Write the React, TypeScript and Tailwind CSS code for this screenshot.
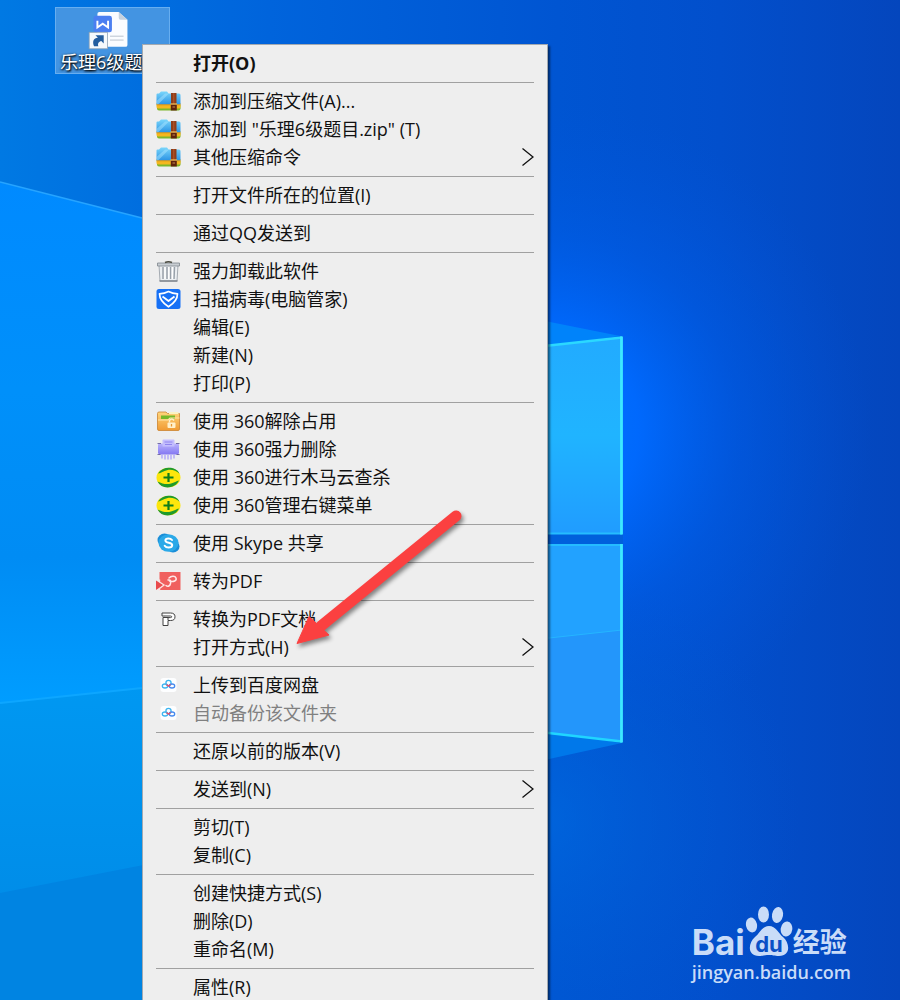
import type { ReactNode } from "react"

type MenuItem = {
    label: string
    icon?: ReactNode
    submenu?: boolean
    disabled?: boolean
    bold?: boolean
}

function ZipIcon() {
    return (
        <svg viewBox="0 0 25 20" className="h-5 w-[25px]" aria-hidden="true">
            <defs>
                <linearGradient id="zipBlue" x1="0" y1="0" x2="0" y2="1">
                    <stop offset="0" stopColor="#7ad6fb" />
                    <stop offset="1" stopColor="#2b93e4" />
                </linearGradient>
            </defs>
            <path d="M1 14h23.500v3.500q0 2-2 2H3q-2 0-2-2z" fill="#7fb62b" />
            <path d="M0.500 12h24v4q0 1.500-2 1.500H2.500q-2 0-2-1.500z" fill="#f5b71f" />
            <path d="M0.500 3.500q0-1 1-1H3L5 0.500h6l1.500 2H23q1.500 0 1.500 1.500v9.500H0.500z" fill="url(#zipBlue)" />
            <path d="M0.500 10L9 2.500h4L2 13.500H0.500z" fill="#a5e3ff" opacity="0.5" />
            <path d="M0.500 13.800h24" stroke="#d98c14" strokeWidth="0.800" />
            <path d="M15 2h5.500v12H15z" fill="#8f3d19" />
            <path d="M17.300 2h1v12h-1z" fill="#b4582a" />
            <path d="M14.800 13.500h6v6h-6z" fill="#5f220c" />
            <path d="M14.500 13h6.500" stroke="#f4c65c" strokeWidth="1.200" />
            <path d="M16.500 16h2.600" stroke="#c98a4c" strokeWidth="1" />
        </svg>
    )
}

function TrashIcon() {
    return (
        <svg viewBox="0 0 25 21" className="h-[21px] w-[25px]" aria-hidden="true">
            <path d="M3 4h19l-1 16H4z" fill="#eceff2" stroke="#a5abb2" strokeWidth="1" />
            <path d="M7 6v12M11 6v12M14.500 6v12M18.500 6l-.5 12" stroke="#98a0a9" strokeWidth="1.500" />
            <path d="M9 6v12M12.800 6v12M16.500 6v12" stroke="#ffffff" strokeWidth="1.200" />
            <path d="M1.500 2h22v3h-22z" fill="#c9ced3" stroke="#7f868d" strokeWidth="0.800" />
            <path d="M9 1.500q3.500-1.500 7 0" fill="none" stroke="#4a4a40" strokeWidth="1.400" />
            <path d="M3.500 20h18" stroke="#7b828a" strokeWidth="1.400" />
        </svg>
    )
}

function ShieldIcon() {
    return (
        <svg viewBox="0 0 25 20" className="h-5 w-[25px]" aria-hidden="true">
            <rect x="0.500" width="24" height="20" rx="2.500" fill="#1670f5" />
            <path
                d="M12.500 2.500q4 2 9 2.300c0 6-3.500 9.500-9 13-5.500-3.500-9-7-9-13q5-.3 9-2.300z"
                fill="none"
                stroke="#fff"
                strokeWidth="1.700"
                strokeLinejoin="round"
            />
            <path d="M6.500 7.500l6 4.500 6-4.500" fill="none" stroke="#fff" strokeWidth="1.800" strokeLinejoin="round" />
        </svg>
    )
}

function UnlockFolderIcon() {
    return (
        <svg viewBox="0 0 25 20" className="h-5 w-[25px]" aria-hidden="true">
            <defs>
                <linearGradient id="folderOrange" x1="0" y1="0" x2="0" y2="1">
                    <stop offset="0" stopColor="#ffd67c" />
                    <stop offset="1" stopColor="#f09a32" />
                </linearGradient>
            </defs>
            <path d="M1.500 2.500q0-1.500 1.500-1.500h7l1.500 1.500H23.500V18q0 1.500-1.500 1.500H3q-1.500 0-1.500-1.500z" fill="url(#folderOrange)" stroke="#cb8430" strokeWidth="0.800" />
            <path d="M13 1h9.500v2H13z" fill="#fbf3c4" />
            <path d="M5 4.500h14v3.500H5z" fill="#76b82a" />
            <path d="M2 9h10l2-2h9.500" fill="none" stroke="#ffe6a8" strokeWidth="1.200" />
            <rect x="11.500" y="11.500" width="8" height="5.500" rx="1" fill="#fff0c9" />
            <path d="M13.500 11.500V9.500q2.200-3 4.500 0" fill="none" stroke="#fff0c9" strokeWidth="1.400" />
            <path d="M15.500 13v2.500" stroke="#e79632" strokeWidth="1.300" />
        </svg>
    )
}

function ShredderIcon() {
    return (
        <svg viewBox="0 0 25 21" className="h-[21px] w-[25px]" aria-hidden="true">
            <defs>
                <linearGradient id="shredder" x1="0" y1="0" x2="0" y2="1">
                    <stop offset="0" stopColor="#b9b2fc" />
                    <stop offset="1" stopColor="#8478f2" />
                </linearGradient>
            </defs>
            <path d="M2 6q0-1.500 1.500-1.500h18q1.500 0 1.500 1.500v7.500q0 2-2 2H4q-2 0-2-2z" fill="url(#shredder)" />
            <path d="M6.500 1.500q0-1 1-1h10q1 0 1 1v6h-12z" fill="#c3bdfd" />
            <path d="M8.500 3h8M9 5.500h7" stroke="#9085ee" strokeWidth="1" />
            <path d="M1.500 4.500h3.500M20 4.500h3.500M1.500 15.500h3M20.500 15.500h3" stroke="#5b5394" strokeWidth="0.800" />
            <path d="M6 15.500v4M9 15.500v5M12 15.500v5M15 15.500v5M18 15.500v4" stroke="#b3abf8" strokeWidth="1.500" />
        </svg>
    )
}

function PlusBallIcon() {
    return (
        <svg viewBox="0 0 25 21" className="h-[21px] w-[25px]" aria-hidden="true">
            <ellipse cx="12.500" cy="10.500" rx="12" ry="9.800" fill="#fde60c" />
            <path d="M2 6.500C5 1.500 11-.2 17 1.200c3.500 1 5.500 3 6.500 5.500C20 3.500 15 2 11 3.300 7.500 4.300 5 6 2 6.500z" fill="#1f9a2c" />
            <path d="M1.500 14.500c5 2.500 9.500 3.200 13.500 2 3-.8 5.500-2.500 8-3-2.500 5-7 6.900-11.500 6.900S3.500 18.500 1.500 14.500z" fill="#1f9a2c" />
            <path d="M12.500 6v9M7.500 10.500h10" stroke="#0f7d1c" strokeWidth="2.200" />
        </svg>
    )
}

function SkypeIcon() {
    return (
        <svg viewBox="0 0 25 20" className="h-5 w-[25px]" aria-hidden="true">
            <ellipse cx="8.500" cy="7" rx="7" ry="6.500" fill="#1a8ed8" />
            <ellipse cx="17" cy="13.500" rx="6.500" ry="6" fill="#1a8ed8" />
            <ellipse cx="12.500" cy="10" rx="10" ry="8.800" fill="#2ba9e8" />
            <path
                d="M16 7Q14.800 5.400 12.500 5.400 9.400 5.400 9.400 7.500c0 2.900 6.800 1.600 6.800 4.600 0 2-1.800 2.500-3.700 2.500q-2.600 0-3.800-1.800"
                fill="none"
                stroke="#fff"
                strokeWidth="2"
                strokeLinecap="round"
            />
        </svg>
    )
}

function PdfRedIcon() {
    return (
        <svg viewBox="0 0 25 20" className="h-5 w-[25px]" aria-hidden="true">
            <path d="M3.500 1h21v18H3.500z" fill="#f0605f" />
            <path d="M0 9.500l7.500 4.500L0 19z" fill="#e94b4d" />
            <path d="M3.500 8.500v2.500l4.500 3-4.500 3.500V20" fill="none" stroke="#fbe3e3" strokeWidth="1.400" />
            <path
                d="M10 14.500c2 1.500 4 .5 4.500-2s.5-4-2.500-3.500M13 7c2-2 6-2.500 7 0s-2.500 4.500-6.500 3"
                fill="none"
                stroke="#ffe9e9"
                strokeWidth="1.500"
                strokeLinecap="round"
            />
        </svg>
    )
}

function PdfOutlineIcon() {
    return (
        <svg viewBox="0 0 25 20" className="h-5 w-[25px]" aria-hidden="true">
            <path
                d="M6 4h8.500q4.500 0 4.500 3.800t-4.500 3.700H12V16.500H7V8.500h5V11M6 4v3h8.500q1.200 0 1.200.8t-1.200.8H12"
                fill="#fff"
                stroke="#404040"
                strokeWidth="1"
                strokeLinejoin="round"
            />
        </svg>
    )
}

function NetdiskIcon() {
    return (
        <svg viewBox="0 0 25 20" className="h-5 w-[25px]" aria-hidden="true">
            <rect x="4.500" y="3" width="16" height="14" rx="3" fill="#fdfeff" />
            <circle cx="12.500" cy="8" r="2.600" fill="none" stroke="#3cb4f0" strokeWidth="1.300" />
            <ellipse cx="9" cy="11" rx="2.700" ry="2" fill="none" stroke="#3cb4f0" strokeWidth="1.300" />
            <ellipse cx="16" cy="11" rx="2.700" ry="2" fill="none" stroke="#4589ee" strokeWidth="1.300" />
            <path d="M10.500 9.500l2 1.700 2-1.700" fill="none" stroke="#ee4c67" strokeWidth="1.300" />
        </svg>
    )
}

const MENU_GROUPS: MenuItem[][] = [
    [{ label: "打开(O)", bold: true }],
    [
        { label: "添加到压缩文件(A)...", icon: <ZipIcon /> },
        { label: '添加到 "乐理6级题目.zip" (T)', icon: <ZipIcon /> },
        { label: "其他压缩命令", icon: <ZipIcon />, submenu: true },
    ],
    [{ label: "打开文件所在的位置(I)" }],
    [{ label: "通过QQ发送到" }],
    [
        { label: "强力卸载此软件", icon: <TrashIcon /> },
        { label: "扫描病毒(电脑管家)", icon: <ShieldIcon /> },
        { label: "编辑(E)" },
        { label: "新建(N)" },
        { label: "打印(P)" },
    ],
    [
        { label: "使用 360解除占用", icon: <UnlockFolderIcon /> },
        { label: "使用 360强力删除", icon: <ShredderIcon /> },
        { label: "使用 360进行木马云查杀", icon: <PlusBallIcon /> },
        { label: "使用 360管理右键菜单", icon: <PlusBallIcon /> },
    ],
    [{ label: "使用 Skype 共享", icon: <SkypeIcon /> }],
    [{ label: "转为PDF", icon: <PdfRedIcon /> }],
    [
        { label: "转换为PDF文档", icon: <PdfOutlineIcon /> },
        { label: "打开方式(H)", submenu: true },
    ],
    [
        { label: "上传到百度网盘", icon: <NetdiskIcon /> },
        { label: "自动备份该文件夹", icon: <NetdiskIcon />, disabled: true },
    ],
    [{ label: "还原以前的版本(V)" }],
    [{ label: "发送到(N)", submenu: true }],
    [{ label: "剪切(T)" }, { label: "复制(C)" }],
    [{ label: "创建快捷方式(S)" }, { label: "删除(D)" }, { label: "重命名(M)" }],
    [{ label: "属性(R)" }],
]

function MenuRow({ item }: { item: MenuItem }) {
    return (
        <button
            type="button"
            role="menuitem"
            disabled={item.disabled}
            className="flex h-7 w-full items-center gap-3 text-left text-[18px] leading-7 whitespace-nowrap text-[#111] disabled:text-[#808080]"
        >
            <span className="flex w-[25px] shrink-0 items-center justify-center">{item.icon}</span>
            <span className={item.bold ? "flex-1 font-bold" : "flex-1"}>{item.label}</span>
            {item.submenu && (
                <svg viewBox="0 0 13 20" className="h-5 w-[13px]" aria-hidden="true">
                    <path d="M1.500 1.500l10.500 8.500L1.500 18.500" fill="none" stroke="#111" strokeWidth="1.300" />
                </svg>
            )}
        </button>
    )
}

function RedArrow() {
    return (
        <svg
            viewBox="290 505 180 150"
            className="pointer-events-none absolute top-[460px] left-[147px] h-[150px] w-[180px] drop-shadow-[2px_3px_2px_rgba(0,0,0,0.45)]"
            aria-hidden="true"
        >
            <path d="M456 516L321 626" stroke="#fb4040" strokeWidth="11" strokeLinecap="round" />
            <path d="M297 643.500L309 616.500l20 18.500z" fill="#fb4040" stroke="#fb4040" strokeWidth="1" />
        </svg>
    )
}

function ContextMenu() {
    return (
        <div
            role="menu"
            className="absolute top-[44px] left-[142px] w-[406px] border border-[#a3a9b0] bg-[#eeeeee] px-[13px] py-1 shadow-[2px_2px_2px_rgba(0,0,0,0.5)]"
        >
            {MENU_GROUPS.map((group, index) => (
                <div key={index}>
                    {index > 0 && (
                        <div role="separator" className="flex h-[10px] items-center">
                            <div className="h-px flex-1 bg-[#a0a0a0]" />
                        </div>
                    )}
                    {group.map((item) => (
                        <MenuRow key={item.label} item={item} />
                    ))}
                </div>
            ))}
            <RedArrow />
        </div>
    )
}

function Wallpaper() {
    return (
        <svg
            viewBox="0 0 900 1000"
            preserveAspectRatio="xMidYMid slice"
            className="absolute inset-0 h-full w-full"
            aria-hidden="true"
        >
            <defs>
                <linearGradient id="sky" x1="0" y1="0" x2="1" y2="0">
                    <stop offset="0" stopColor="#0079e3" />
                    <stop offset="0.300" stopColor="#0064dc" />
                    <stop offset="0.620" stopColor="#0055d2" />
                    <stop offset="0.800" stopColor="#024fcc" />
                    <stop offset="1" stopColor="#0446bd" />
                </linearGradient>
                <radialGradient id="glow" gradientUnits="userSpaceOnUse" cx="540" cy="430" r="330">
                    <stop offset="0" stopColor="#0078ff" />
                    <stop offset="0.300" stopColor="#006aff" stopOpacity="0.950" />
                    <stop offset="0.600" stopColor="#005fee" stopOpacity="0.450" />
                    <stop offset="1" stopColor="#0055dc" stopOpacity="0" />
                </radialGradient>
                <linearGradient id="beam" x1="0" y1="0" x2="0" y2="1">
                    <stop offset="0" stopColor="#008aff" />
                    <stop offset="0.400" stopColor="#0090fa" />
                    <stop offset="0.720" stopColor="#008cf4" />
                    <stop offset="1" stopColor="#009dff" />
                </linearGradient>
                <linearGradient id="paneTop" x1="0" y1="0" x2="0" y2="1">
                    <stop offset="0" stopColor="#22abff" />
                    <stop offset="0.500" stopColor="#20b4ff" />
                    <stop offset="1" stopColor="#209cff" />
                </linearGradient>
                <radialGradient id="floor" gradientUnits="userSpaceOnUse" cx="540" cy="820" r="260">
                    <stop offset="0" stopColor="#006ae0" stopOpacity="0.700" />
                    <stop offset="1" stopColor="#0058d2" stopOpacity="0" />
                </radialGradient>
                <linearGradient id="lowerLeft" x1="0" y1="0" x2="0" y2="1">
                    <stop offset="0" stopColor="#0098f2" />
                    <stop offset="1" stopColor="#0088e4" />
                </linearGradient>
            </defs>
            <rect width="900" height="1000" fill="url(#sky)" />
            <rect width="900" height="1000" fill="url(#glow)" />
            <rect width="900" height="1000" fill="url(#floor)" />
            <path d="M0 182L142 218 400 280V700L142 688 0 703z" fill="url(#beam)" />
            <path d="M0 703L200 682V1000H0z" fill="url(#lowerLeft)" />
            <path d="M0 893L200 854V1000H0z" fill="#0084e2" />
            <path d="M0 182L142 218" stroke="#26a4ff" strokeWidth="1.500" />
            <path d="M0 703L142 688" stroke="#0da6ff" strokeWidth="2" />
            <path d="M540 320l80 16-80 12z" fill="#0083fa" />
            <path d="M540 730l82 13-82 18z" fill="#0078ea" />
            <path d="M540 346L622 337V534H540z" fill="url(#paneTop)" />
            <path d="M540 544H622V742L540 732z" fill="#22a2ff" />
            <path d="M540 639L622 630V742L540 732z" fill="#2396fb" />
            <path d="M540 534h83v10h-83z" fill="#0060dc" />
            <path d="M540 639L622 630" stroke="#25b5ff" strokeWidth="1.200" />
            <path d="M540 346.500L622 337.500" stroke="#2bd8ff" strokeWidth="2.500" />
            <path d="M540 732L622 741.500" stroke="#20d5ff" strokeWidth="2.500" />
            <path d="M540 533.500h82M540 545h82" stroke="#25bcff" strokeWidth="2" />
            <path d="M621.500 336.500V534.500M621.500 544V742.500" stroke="#3de9ff" strokeWidth="2.800" />
        </svg>
    )
}

function DesktopShortcut() {
    return (
        <a
            href="#shortcut"
            className="absolute top-[7px] left-[55px] flex h-[67px] w-[115px] flex-col border border-[#67aef0] bg-[#4394e2] pt-[3px]"
        >
            <svg viewBox="0 0 44 40" className="ml-8 h-10 w-11" aria-hidden="true">
                <path d="M9 3q0-2 2-2h20l9 8v26q0 2-2 2H11q-2 0-2-2z" fill="#fafcff" />
                <path d="M31 1l9 8h-7q-2 0-2-2z" fill="#c6d2df" />
                <path d="M22 26h14M22 30h14" stroke="#b9c2cd" strokeWidth="1" />
                <rect x="5" y="5" width="19" height="17" rx="2.500" fill="#4b7ff1" />
                <path d="M9 10v7l5.500-4 5.500 4v-7" fill="none" stroke="#fff" strokeWidth="2" />
                <rect x="0.500" y="22" width="19" height="17" fill="#f6f9fc" stroke="#8da0b4" strokeWidth="0.800" />
                <path d="M5.500 36.500C3.500 31 5 28 9.500 27.500L7 25h8.500v8.500L13 31c-2.500.5-4 2.500-3 5.500z" fill="#235d9f" />
            </svg>
            <span className="w-full overflow-hidden pl-1 text-[18px] leading-6 whitespace-nowrap text-white [text-shadow:1px_1px_2px_#000,0_1px_3px_#000]">
                乐理6级题目
            </span>
        </a>
    )
}

function Watermark() {
    return (
        <div className="absolute right-[49px] bottom-4 flex flex-col items-start text-[#c9dcf8]">
            <div className="flex items-end">
                <span className="font-['Inter','Noto_Sans',sans-serif] text-[35px] leading-9 font-bold">Bai</span>
                <svg viewBox="0 0 48 54" className="h-[54px] w-12" aria-hidden="true">
                    <g fill="#c9dcf8">
                        <ellipse cx="6.500" cy="19" rx="5.500" ry="7.500" transform="rotate(-12 6.500 19)" />
                        <ellipse cx="18.500" cy="8.500" rx="5.500" ry="8" />
                        <ellipse cx="32.500" cy="9" rx="5.500" ry="8" transform="rotate(10 32.500 9)" />
                        <ellipse cx="41.500" cy="23" rx="5.800" ry="7.500" transform="rotate(8 41.500 23)" />
                        <path d="M24 20c7 0 9 7 14 11 7 6 8 19-4 19-5 0-6-1-10-1s-5 1-10 1c-12 0-11-13-4-19C15 27 17 20 24 20z" />
                    </g>
                    <text x="24" y="46" textAnchor="middle" fontSize="22" fontWeight="bold" fill="#0a50c6" fontFamily="Inter, sans-serif">
                        du
                    </text>
                </svg>
                <span className="text-[27px] leading-9 font-bold">经验</span>
            </div>
            <span className="font-['Open_Sans','Noto_Sans',sans-serif] text-[18px] leading-6 font-semibold">jingyan.baidu.com</span>
        </div>
    )
}

export default function App() {
    return (
        <main className="relative h-screen w-full overflow-hidden bg-[#0058d4] font-['Open_Sans','Noto_Sans_CJK_SC',sans-serif]">
            <Wallpaper />
            <DesktopShortcut />
            <Watermark />
            <ContextMenu />
        </main>
    )
}
